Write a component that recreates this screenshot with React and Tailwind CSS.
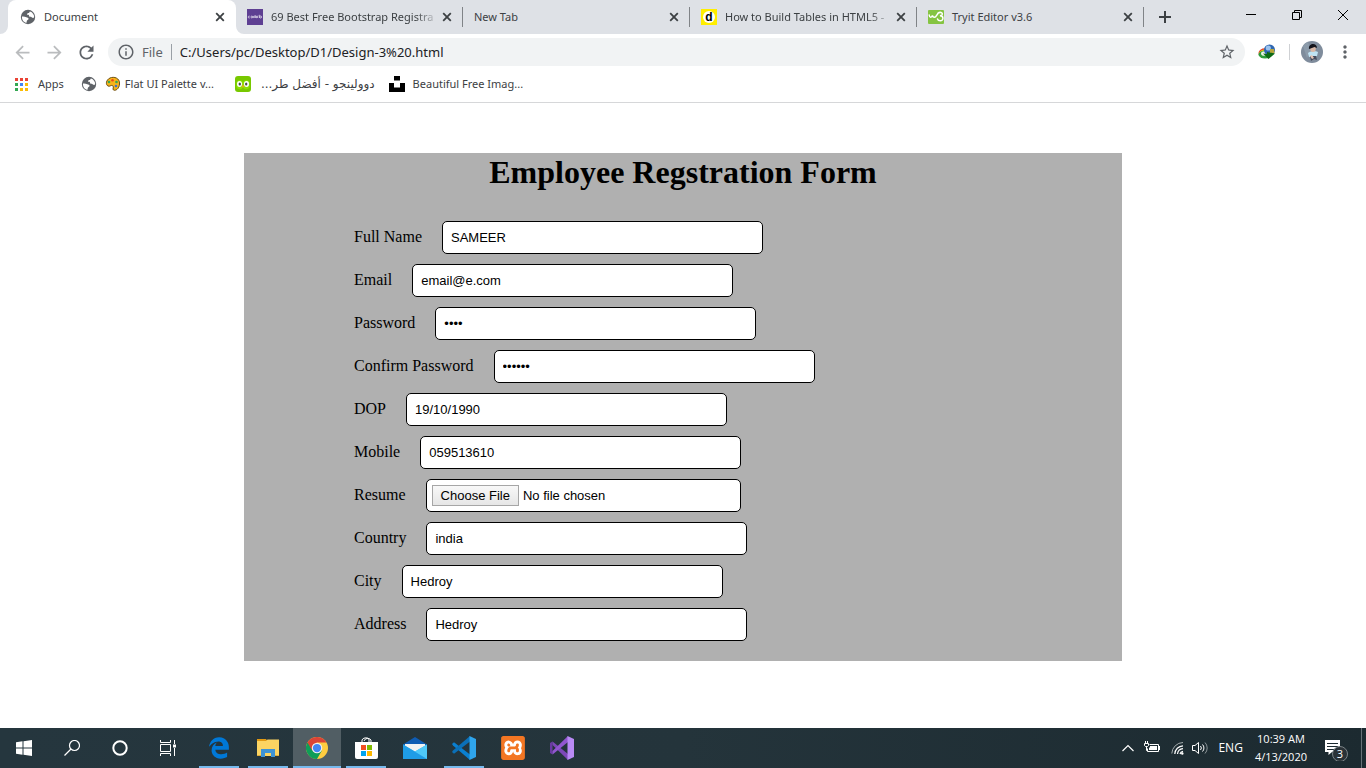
import React from "react";
import {
  MdArrowBack,
  MdArrowForward,
  MdRefresh,
  MdInfoOutline,
  MdStarBorder,
  MdMoreVert,
} from "react-icons/md";
import { FaEdgeLegacy } from "react-icons/fa";
import { SiXampp } from "react-icons/si";

function GlobeIcon() {
  return (
    <svg width="16" height="16" viewBox="0 0 16 16" className="shrink-0" aria-hidden="true">
      <circle cx="8" cy="8" r="7.200" fill="#5f6368" />
      <path d="M10 2.400c2.500.8 4.200 3 4.200 5.600-.7 1.200-1.500 1-2.300.4-.8-.7-1.400-.2-2.200-.6-1.200-.6-.2-1.600-1.200-2-.9-.3-1.700.2-1.500-.8.200-.9 1.600-.4 2.200-1.200.3-.5.2-1.200.8-1.400z" fill="#fff" />
      <path d="M2 7.500c1.500-.3 3.200.1 4.300.8 1 .6 2.300.4 2.300 1.500 0 1-1 1.100-1.500 1.700-.5.700-.3 1.700-.8 2.500C3.600 13.200 1.700 10.700 2 7.500z" fill="#fff" />
    </svg>
  );
}

function ColorlibIcon() {
  return (
    <svg width="16" height="16" viewBox="0 0 16 16" aria-hidden="true">
      <rect width="16" height="16" fill="#5e3f92" />
      <g fill="none" stroke="#e6dff0" strokeWidth=".8">
        <path d="M2.700 7.200a1 1 0 1 0 0 1.700M8.100 6v3M10.300 9V7.600q0-.7.9-.7M12.300 5.800V9" />
        <circle cx="4.800" cy="8" r=".9" />
        <circle cx="6.800" cy="8" r=".6" />
        <circle cx="9.300" cy="8" r=".7" />
        <circle cx="13.600" cy="8" r="1" />
      </g>
    </svg>
  );
}

function DIcon() {
  return (
    <span className="flex h-4 w-4 items-center justify-center bg-[#ffee00]">
      <span className="flex h-3 w-3 items-center justify-center rounded-full bg-white font-['Liberation_Sans'] text-[12px] leading-3 font-bold text-black">
        d
      </span>
    </span>
  );
}

function W3Icon() {
  return (
    <svg width="16" height="16" viewBox="0 0 16 16" aria-hidden="true">
      <rect y="1" width="16" height="14" rx="1" fill="#85c441" />
      <path d="M1.200 6c.3 3 2.500 3 3.200.4C5 9 7.500 9 8.500 6.500L9.800 4.800" fill="none" stroke="#fff" strokeWidth="1.500" strokeLinecap="round" />
      <path d="M10 4.200c2-1.500 4.800-.8 4.200 1.200-.3.900-1.300 1.200-2.200 1.400 4 0 3.700 5 .3 5-1.500 0-2.500-.8-2.800-1.800" fill="none" stroke="#fff" strokeWidth="1.500" strokeLinecap="round" />
    </svg>
  );
}

function CloseGlyph() {
  return (
    <svg width="16" height="16" viewBox="0 0 16 16" aria-hidden="true">
      <path d="M4.200 4.200l7.600 7.600M11.800 4.200l-7.600 7.600" stroke="#3c4043" strokeWidth="1.800" />
    </svg>
  );
}

const tabs = [
  { title: "69 Best Free Bootstrap Registra", icon: <ColorlibIcon />, fade: true },
  { title: "New Tab", icon: null },
  { title: "How to Build Tables in HTML5 -", icon: <DIcon />, fade: true },
  { title: "Tryit Editor v3.6", icon: <W3Icon /> },
];

function TabTitle({ fade, children }) {
  return (
    <button
      type="button"
      className={
        "min-w-0 flex-1 text-left text-[11px] leading-4 whitespace-nowrap text-[#3c4043] " +
        (fade ? "[mask-image:linear-gradient(to_right,black_calc(100%-24px),transparent)]" : "")
      }
    >
      {children}
    </button>
  );
}

function TabStrip() {
  return (
    <header className="flex h-[34px] bg-[#dee1e6]">
      <div className="flex min-w-0 flex-1 pl-2">
        <div className="relative flex w-[228px] min-w-0 items-center gap-2 rounded-t-lg bg-white pr-2 pl-3">
          <svg className="absolute bottom-0 -left-2" width="8" height="8" aria-hidden="true">
            <path d="M0 8h8V0a8 8 0 0 1-8 8z" fill="#fff" />
          </svg>
          <svg className="absolute -right-2 bottom-0" width="8" height="8" aria-hidden="true">
            <path d="M8 8H0V0a8 8 0 0 0 8 8z" fill="#fff" />
          </svg>
          <GlobeIcon />
          <TabTitle>Document</TabTitle>
          <button type="button" aria-label="Close tab">
            <CloseGlyph />
          </button>
        </div>
        {tabs.map((tab) => (
          <div key={tab.title} className="flex w-[227px] min-w-0 items-center">
            <div className="flex min-w-0 flex-1 items-center gap-2 pr-[7px] pl-[11px]">
              {tab.icon && <span className="shrink-0">{tab.icon}</span>}
              <div className="flex min-w-0 flex-1 items-center">
                <TabTitle fade={tab.fade}>{tab.title}</TabTitle>
                <button type="button" aria-label={"Close " + tab.title} className="shrink-0">
                  <CloseGlyph />
                </button>
              </div>
            </div>
            <span className="h-5 w-px bg-[#808387]" />
          </div>
        ))}
        <button type="button" aria-label="New tab" className="flex w-[42px] shrink-0 items-center justify-center">
          <svg width="12" height="12" viewBox="0 0 12 12" aria-hidden="true">
            <path d="M6 0v12M0 6h12" stroke="#3c4043" strokeWidth="2" />
          </svg>
        </button>
      </div>
      <div className="flex h-[29px] shrink-0">
        <button type="button" aria-label="Minimize" className="flex w-[46px] items-center justify-center">
          <svg width="10" height="10" aria-hidden="true">
            <path d="M0 4.500h10" stroke="#000" />
          </svg>
        </button>
        <button type="button" aria-label="Restore" className="flex w-[46px] items-center justify-center">
          <svg width="10" height="10" fill="none" stroke="#000" aria-hidden="true">
            <path d="M.5 2.500h7v7h-7zM2.500 2.500v-2h7v7h-2" />
          </svg>
        </button>
        <button type="button" aria-label="Close window" className="flex w-[46px] items-center justify-center">
          <svg width="10" height="10" aria-hidden="true">
            <path d="M0 0l10 10M10 0L0 10" stroke="#000" />
          </svg>
        </button>
      </div>
    </header>
  );
}

function DownloadManagerIcon() {
  return (
    <svg width="18" height="16" viewBox="0 0 18 16" aria-hidden="true">
      <ellipse cx="7" cy="9" rx="6.500" ry="4.700" fill="#e03a2c" />
      <ellipse cx="7" cy="9.700" rx="6" ry="4.200" fill="#f5d312" />
      <ellipse cx="7" cy="10.500" rx="6.500" ry="4" fill="#2e9c3b" />
      <ellipse cx="6.500" cy="9.500" rx="3.500" ry="2.300" fill="#e9f3e4" />
      <circle cx="11.500" cy="6" r="5.500" fill="#2f67b1" />
      <circle cx="10.300" cy="4" r="2.600" fill="#9cc3ee" />
      <path d="M12 5l4 0 .5 4-4.500 1z" fill="#b9a53c" />
      <path d="M5 9.500l4 .5V8l8 1.500L10.500 15z" fill="#0e6b15" />
    </svg>
  );
}

function Avatar() {
  return (
    <svg width="22" height="22" viewBox="0 0 22 22" aria-hidden="true">
      <circle cx="11" cy="11" r="11" fill="#7f8c9c" />
      <path d="M2 5a11 11 0 0 1 5-4l3 8-4 8z" fill="#8c9baa" />
      <path d="M7 12c2-2 7-3 10-1l-1 4-8 1z" fill="#bfe3f3" />
      <ellipse cx="12" cy="8" rx="2.800" ry="3" fill="#dab8a6" />
      <path d="M8 8c-1-6 8-7 8-1l-2.500-1-4 1.500z" fill="#15151c" />
      <path d="M9 15h6l1 4-3-1-3 2z" fill="#474b5c" />
      <path d="M9 15l2-1 2 3-2 1z" fill="#e5c4b5" />
    </svg>
  );
}

function Toolbar() {
  return (
    <div className="flex h-9 items-center bg-white pl-3">
      <div className="flex items-center gap-[11px]">
        <button type="button" aria-label="Back">
          <MdArrowBack size={21} color="#babcbe" />
        </button>
        <button type="button" aria-label="Forward">
          <MdArrowForward size={21} color="#babcbe" />
        </button>
        <button type="button" aria-label="Reload">
          <MdRefresh size={21} color="#5f6368" />
        </button>
      </div>
      <div className="ml-[11px] flex h-7 min-w-0 flex-1 items-center rounded-full bg-[#f1f3f4] px-[9px]">
        <MdInfoOutline size={18} color="#5f6368" className="shrink-0" />
        <span className="ml-[7px] text-[13px] leading-4 text-[#5f6368]">File</span>
        <span className="mx-2 h-4 w-px bg-[#9aa0a6]" />
        <input
          aria-label="Address"
          defaultValue="C:/Users/pc/Desktop/D1/Design-3%20.html"
          className="h-5 min-w-0 flex-1 bg-transparent text-[13px] text-[#202124] outline-none"
        />
        <button type="button" aria-label="Bookmark this page">
          <MdStarBorder size={18} color="#5f6368" />
        </button>
      </div>
      <div className="flex items-center pl-[13px]">
        <button type="button" aria-label="Download manager">
          <DownloadManagerIcon />
        </button>
        <span className="mr-[11px] ml-[13px] h-4 w-px bg-[#cfd1d4]" />
        <button type="button" aria-label="Profile">
          <Avatar />
        </button>
        <button type="button" aria-label="Menu" className="mr-[11px] ml-3">
          <MdMoreVert size={20} color="#5f6368" />
        </button>
      </div>
    </div>
  );
}

const appDots = ["#ea4335", "#ea4335", "#ea4335", "#34a853", "#4285f4", "#fbbc05", "#34a853", "#fbbc05", "#fbbc05"];

function Bookmarks() {
  return (
    <nav aria-label="Bookmarks" className="flex h-[33px] items-start border-b border-[#d6d7d9] bg-white pt-1.5 pl-[15px] text-[11px] leading-4 text-[#3c4043]">
      <a href="#apps" className="flex items-center gap-2.5">
        <svg width="13" height="13" viewBox="0 0 13 13" aria-hidden="true">
          {appDots.map((c, i) => (
            <rect key={i} x={(i % 3) * 5} y={Math.floor(i / 3) * 5} width="3" height="3" fill={c} />
          ))}
        </svg>
        Apps
      </a>
      <a href="#page" aria-label="Page" className="ml-[17px]">
        <GlobeIcon />
      </a>
      <a href="#palette" className="ml-2 flex items-center gap-1">
        <svg width="16" height="16" viewBox="0 0 16 16" aria-hidden="true">
          <path d="M5 2C9 .2 15 2 14.500 8c-.3 5-4 7-6 6-1.500-.9 1-3-.7-4.200C6 8.500 5 11 3 10 .5 8.700.8 4 5 2z" fill="#f9b418" stroke="#6b4e12" />
          <circle cx="4" cy="6" r="1.300" fill="#36a852" />
          <circle cx="7.500" cy="4.200" r="1.300" fill="#e8491d" />
          <circle cx="11.500" cy="6" r="1.300" fill="#36a852" />
          <circle cx="11" cy="10" r="1.300" fill="#4471c4" />
        </svg>
        Flat UI Palette v...
      </a>
      <a href="#duolingo" className="ml-[21px] flex items-center gap-2.5">
        <svg width="16" height="16" viewBox="0 0 16 16" aria-hidden="true">
          <rect width="16" height="16" rx="3" fill="#78c800" />
          <path d="M1.500 8A3.200 3.200 0 0 1 8 7a3.200 3.200 0 0 1 6.500 1v1.500A3.200 3.200 0 0 1 8 10.500 3.200 3.200 0 0 1 1.500 9.500z" fill="#8ee000" />
          <ellipse cx="4.500" cy="8" rx="2.500" ry="3" fill="#fff" />
          <ellipse cx="11.500" cy="8" rx="2.500" ry="3" fill="#fff" />
          <ellipse cx="4.800" cy="8" rx="1.200" ry="1.600" fill="#4b4b4b" />
          <ellipse cx="11.200" cy="8" rx="1.200" ry="1.600" fill="#4b4b4b" />
          <path d="M6.700 9.500h2.600L8 12z" fill="#f9a11b" />
        </svg>
        <span dir="rtl" className="font-['DejaVu_Sans',sans-serif] text-[12px]">
          دوولينجو - أفضل طر...
        </span>
      </a>
      <a href="#unsplash" className="ml-3.5 flex items-center gap-2">
        <svg width="16" height="16" viewBox="0 0 16 16" aria-hidden="true">
          <path d="M5 0h6v4.500H5zM0 7h5v4.500h6V7h5v9H0z" fill="#000" />
        </svg>
        Beautiful Free Imag...
      </a>
    </nav>
  );
}

const fields = [
  { id: "fullname", label: "Full Name", type: "text", value: "SAMEER" },
  { id: "email", label: "Email", type: "email", value: "email@e.com" },
  { id: "password", label: "Password", type: "password", value: "1234" },
  { id: "confirm", label: "Confirm Password", type: "password", value: "123456" },
  { id: "dop", label: "DOP", type: "text", value: "19/10/1990" },
  { id: "mobile", label: "Mobile", type: "tel", value: "059513610" },
  { id: "resume", label: "Resume", type: "file" },
  { id: "country", label: "Country", type: "text", value: "india" },
  { id: "city", label: "City", type: "text", value: "Hedroy" },
  { id: "address", label: "Address", type: "text", value: "Hedroy" },
];

function RegistrationForm() {
  return (
    <form className="mx-auto w-full max-w-[878px] bg-[#b0b0b0] pb-5 font-['Liberation_Serif',serif] text-black">
      <h1 className="text-center text-[32px] leading-[38px] font-bold">Employee Regstration Form</h1>
      <div className="flex flex-col gap-2.5 pt-[30px] pl-[110px]">
        {fields.map((f) => (
          <div key={f.id} className="flex items-center gap-5">
            <label htmlFor={f.id} className="pb-0.5 text-[16px] leading-[18px]">
              {f.label}
            </label>
            {f.type === "file" ? (
              <input
                id={f.id}
                type="file"
                className="h-[33px] w-[315px] rounded-[5px] border border-black bg-white p-[5px] font-['Liberation_Sans',sans-serif] text-[13px] leading-[21px] file:mr-1 file:h-[21px] file:border file:border-solid file:border-[#a6a6a6] file:bg-linear-to-b file:from-[#f8f8f8] file:to-[#e6e6e6] file:px-2 file:leading-[19px]"
              />
            ) : (
              <input
                id={f.id}
                type={f.type}
                defaultValue={f.value}
                className="h-[33px] w-[321px] rounded-[5px] border border-black bg-white px-2 font-['Liberation_Sans',sans-serif] text-[13px]"
              />
            )}
          </div>
        ))}
      </div>
    </form>
  );
}

function ExplorerIcon() {
  return (
    <svg width="22" height="20" viewBox="0 0 22 20" aria-hidden="true">
      <path d="M0 1h9l1.500 2H0z" fill="#e29a13" />
      <path d="M0 3h9l1.500-1.500H22V18H0z" fill="#fcd462" />
      <path d="M4 11h14v8h-4v-4H8v4H4z" fill="#3e93d4" />
      <path d="M0 17h4v1H0zM18 17h4v1h-4z" fill="#e0ad3b" />
    </svg>
  );
}

function ChromeIcon() {
  return (
    <svg width="22" height="22" viewBox="0 0 48 48" aria-hidden="true">
      <circle cx="24" cy="24" r="24" fill="#ffcd40" />
      <path d="M3.200 12A24 24 0 0 0 24 48l10.400-18L24 24z" fill="#0f9d58" />
      <path d="M3.200 12A24 24 0 0 1 44.800 12H24L13.600 30z" fill="#db4437" />
      <circle cx="24" cy="24" r="11.500" fill="#f1f1f1" />
      <circle cx="24" cy="24" r="9" fill="#4285f4" />
    </svg>
  );
}

function StoreIcon() {
  return (
    <svg width="24" height="24" viewBox="0 0 24 24" aria-hidden="true">
      <path d="M8 7V4a4 3 0 0 1 7-1v4M10 5a4 4 0 0 1 7-1v3" fill="none" stroke="#fff" />
      <path d="M1 6h23v15a2 2 0 0 1-2 2H3a2 2 0 0 1-2-2z" fill="#fff" />
      <path d="M7 9h5v5H7z" fill="#f25022" />
      <path d="M13 9h5v5h-5z" fill="#7fba00" />
      <path d="M7 15h5v5H7z" fill="#00a4ef" />
      <path d="M13 15h5v5h-5z" fill="#ffb900" />
    </svg>
  );
}

function MailIcon() {
  return (
    <svg width="24" height="22" viewBox="0 0 24 22" aria-hidden="true">
      <path d="M0 7.500L12 0l12 7.500V12H0z" fill="#0f5cb3" />
      <path d="M2 7h20v8H2z" fill="#f2f2f2" />
      <path d="M0 7.500l12 7 12-7V22H0z" fill="#33b1ef" />
      <path d="M24 7.500V22H0l12-7.500z" fill="#4fc9f8" />
      <path d="M0 7.500L24 22H0z" fill="#1f9ce6" />
    </svg>
  );
}

function CodeIcon() {
  return (
    <svg width="24" height="24" viewBox="0 0 24 24" aria-hidden="true">
      <path d="M0 8l2-1.800L18 18.500V24L1 9.500z" fill="#0a7fd0" />
      <path d="M0 16l2 1.800L18 5.500V0L1 14.500z" fill="#0b70b8" />
      <path d="M17.500 0L24 3v18l-6.500 3z" fill="#2fa5ec" />
    </svg>
  );
}

function XamppIcon() {
  return (
    <svg width="24" height="24" viewBox="0 0 24 24" aria-hidden="true">
      <rect x="2" y="2" width="20" height="20" fill="#fff" />
      <SiXampp size={24} color="#f37623" />
    </svg>
  );
}

function StudioIcon() {
  return (
    <svg width="24" height="24" viewBox="0 0 24 24" aria-hidden="true">
      <path d="M0 7l2.500-1.500V18.500L0 17z" fill="#6b3aa3" />
      <path d="M2.500 5.500L18 18v6L2.500 9z" fill="#7d48b8" />
      <path d="M2.500 18.500L18 6V0L2.500 15z" fill="#9256d0" />
      <path d="M17.500 0L24 3v18l-6.500 3z" fill="#b98af5" />
    </svg>
  );
}

const apps = [
  { name: "Microsoft Edge", icon: <FaEdgeLegacy size={22} color="#0078d7" />, open: true },
  { name: "File Explorer", icon: <ExplorerIcon />, open: true },
  { name: "Google Chrome", icon: <ChromeIcon />, open: true, active: true },
  { name: "Microsoft Store", icon: <StoreIcon />, open: true },
  { name: "Mail", icon: <MailIcon /> },
  { name: "Visual Studio Code", icon: <CodeIcon />, open: true },
  { name: "XAMPP", icon: <XamppIcon /> },
  { name: "Visual Studio", icon: <StudioIcon /> },
];

function SystemButtons() {
  const cell = "flex w-12 items-center justify-center";
  return (
    <>
      <button type="button" aria-label="Start" className={cell}>
        <svg width="16" height="16" viewBox="0 0 16 16" aria-hidden="true">
          <path d="M0 2.200L6.500 1.300V7.500H0zM7.500 1.200L16 0v7.500H7.500zM0 8.500h6.500v6.200L0 13.800zM7.500 8.500H16V16l-8.500-1.200z" fill="#fff" />
        </svg>
      </button>
      <button type="button" aria-label="Search" className={cell}>
        <svg width="16" height="16" viewBox="0 0 16 16" fill="none" stroke="#fff" strokeWidth="1.200" aria-hidden="true">
          <circle cx="10.500" cy="5.500" r="5" />
          <path d="M7 9L.5 15.500" />
        </svg>
      </button>
      <button type="button" aria-label="Cortana" className={cell}>
        <svg width="16" height="16" viewBox="0 0 16 16" aria-hidden="true">
          <circle cx="8" cy="8" r="6.700" fill="none" stroke="#fff" strokeWidth="2" />
        </svg>
      </button>
      <button type="button" aria-label="Task view" className={cell}>
        <svg width="16" height="16" viewBox="0 0 16 16" fill="none" stroke="#fff" aria-hidden="true">
          <path d="M.5 4.500h10v7H.5zM.5 0v2.500h10V0M.5 16v-2.500h10V16M14.500 0v4M14.500 8v8" />
          <path d="M13 4.500h3v3h-3z" fill="#fff" stroke="none" />
        </svg>
      </button>
    </>
  );
}

function Tray() {
  return (
    <div className="ml-auto flex shrink-0 items-center font-['Open_Sans',sans-serif] text-white">
      <button type="button" aria-label="Show hidden icons">
        <svg width="12" height="8" viewBox="0 0 12 8" fill="none" stroke="#fff" strokeWidth="1.200" aria-hidden="true">
          <path d="M.5 7L6 1.500 11.500 7" />
        </svg>
      </button>
      <svg className="ml-2.5" width="16" height="14" viewBox="0 0 16 14" fill="none" stroke="#fff" aria-label="Battery">
        <path d="M5.500 3.500h9v7h-11v-3" />
        <path d="M6 5h7v4H5V6.500h1zM15 5h1v4h-1z" fill="#fff" stroke="none" />
        <path d="M1.500 0v2M3.500 0v2M.5 2.500h4v2l-1 1h-2l-1-1zM2.500 5.500v4h1" />
      </svg>
      <svg className="ml-[11px]" width="13" height="14" viewBox="0 0 13 14" fill="none" stroke="#fff" aria-label="Network">
        <path d="M.8 12.500A11.500 11.500 0 0 1 12 1.500" stroke="#a4abad" />
        <path d="M3.800 13A8.500 8.500 0 0 1 12 4.800M6.500 13A6 6 0 0 1 12 7.700M9 13a3.500 3.500 0 0 1 3-2.700" strokeWidth="1.200" />
        <circle cx="11.300" cy="12.500" r="1.200" fill="#fff" stroke="none" />
      </svg>
      <svg className="ml-2" width="16" height="14" viewBox="0 0 16 14" fill="none" stroke="#fff" aria-label="Volume">
        <path d="M.5 4.500h2.500l3.500-3v11l-3.500-3H.5z" />
        <path d="M8.500 5a3 3 0 0 1 0 4M10.500 3.500a5 5 0 0 1 0 7" />
        <path d="M13 1.500a8 8 0 0 1 0 11" stroke="#8b9498" />
      </svg>
      <span className="ml-2.5 text-[12px] leading-4">ENG</span>
      <div className="ml-3 text-center text-[11px] leading-[18px]">
        <div>10:39 AM</div>
        <div>4/13/2020</div>
      </div>
      <button type="button" aria-label="Notifications" className="ml-[17px]">
        <svg width="26" height="26" viewBox="0 0 26 26" aria-hidden="true">
          <path d="M1 5h15v12H8l-3.500 3v-3H1z" fill="#fff" />
          <path d="M3 8.500h11M3 11.500h11M3 14.500h7" stroke="#1d2b31" />
          <circle cx="16" cy="19" r="7.500" fill="#2a3237" stroke="#7b8387" />
          <text x="16" y="23" textAnchor="middle" fill="#fff" fontSize="11" fontFamily="Open Sans, sans-serif">
            3
          </text>
        </svg>
      </button>
      <span className="mr-1 ml-[11px] h-10 w-px bg-[#677177]" />
    </div>
  );
}

function Taskbar() {
  return (
    <footer className="flex h-10 bg-linear-to-r from-[#25363e] via-[#24343b] to-[#1c2a30]">
      <SystemButtons />
      <div className="ml-[3px] flex gap-px">
        {apps.map((app) => (
          <button
            key={app.name}
            type="button"
            aria-label={app.name}
            className={"flex w-12 flex-col items-center " + (app.active ? "bg-[#515e64]" : "")}
          >
            <span className="flex h-[38px] items-center pt-0.5">{app.icon}</span>
            {app.open && <span className={"h-0.5 bg-[#76b9ed] " + (app.active ? "w-12" : "w-10")} />}
          </button>
        ))}
      </div>
      <Tray />
    </footer>
  );
}

export default function App() {
  return (
    <div className="flex min-h-screen flex-col bg-white font-['Noto_Sans',sans-serif]">
      <TabStrip />
      <Toolbar />
      <Bookmarks />
      <main className="flex-1 pt-[50px]">
        <RegistrationForm />
      </main>
      <Taskbar />
    </div>
  );
}
